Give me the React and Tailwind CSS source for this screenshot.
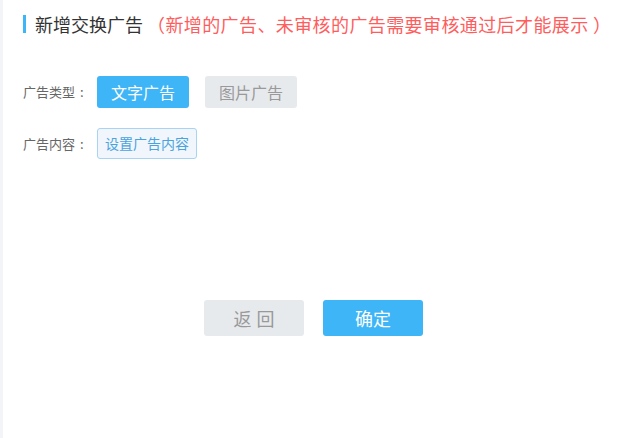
import { useState } from "react";

const font = { fontFamily: '"Noto Sans CJK SC", "Noto Sans", sans-serif' };

export default function App() {
  const [type, setType] = useState("text");

  return (
    <div className="flex h-[438px] w-[628px] bg-white" style={font}>
      {/* left strip */}
      <div className="w-[3px] shrink-0 bg-[#f2f4f7]" />

      <div className="flex flex-1 flex-col pl-[20px]">
        {/* Title */}
        <div className="mt-[15px] flex h-[18px] items-center">
          <span className="h-[18px] w-[3px] bg-[#3db5f6]" />
          <span className="ml-[9px] text-[18px] leading-none text-[#333]">新增交换广告</span>
          <span className="ml-[4px] text-[18px] leading-none tracking-[0.4px] text-[#ff5d5d]">
            （新增的广告、未审核的广告需要审核通过后才能展示 ）
          </span>
        </div>

        {/* Ad type */}
        <div className="mt-[43px] flex items-center">
          <span className="w-[74px] text-[13px] text-[#666]">
            广告类型<span className="ml-[5px]">:</span>
          </span>
          <button
            onClick={() => setType("text")}
            className={
              type === "text"
                ? "h-[32px] w-[92px] rounded-[3px] bg-[#3db5f6] text-[16px] text-white"
                : "h-[32px] w-[92px] rounded-[3px] bg-[#e7eaed] text-[16px] text-[#999]"
            }
          >
            文字广告
          </button>
          <button
            onClick={() => setType("image")}
            className={
              type === "image"
                ? "ml-[16px] h-[32px] w-[92px] rounded-[3px] bg-[#3db5f6] text-[16px] text-white"
                : "ml-[16px] h-[32px] w-[92px] rounded-[3px] bg-[#e7eaed] text-[16px] text-[#999]"
            }
          >
            图片广告
          </button>
        </div>

        {/* Ad content */}
        <div className="mt-[20px] flex items-center">
          <span className="w-[74px] text-[13px] text-[#666]">
            广告内容<span className="ml-[5px]">:</span>
          </span>
          <button className="h-[31px] w-[100px] rounded-[3px] border border-[#a9d3f2] bg-[#f0f6fb] text-[14px] text-[#4ba3de]">
            设置广告内容
          </button>
        </div>

        {/* Actions */}
        <div className="mt-[141px] flex justify-center gap-[19px] pr-[24px]">
          <button className="h-[36px] w-[100px] rounded-[3px] bg-[#e7eaed] pl-[5px] text-[18px] tracking-[5px] text-[#999]">
            返回
          </button>
          <button className="h-[36px] w-[100px] rounded-[3px] bg-[#3db5f6] text-[18px] text-white">
            确定
          </button>
        </div>
      </div>
    </div>
  );
}
